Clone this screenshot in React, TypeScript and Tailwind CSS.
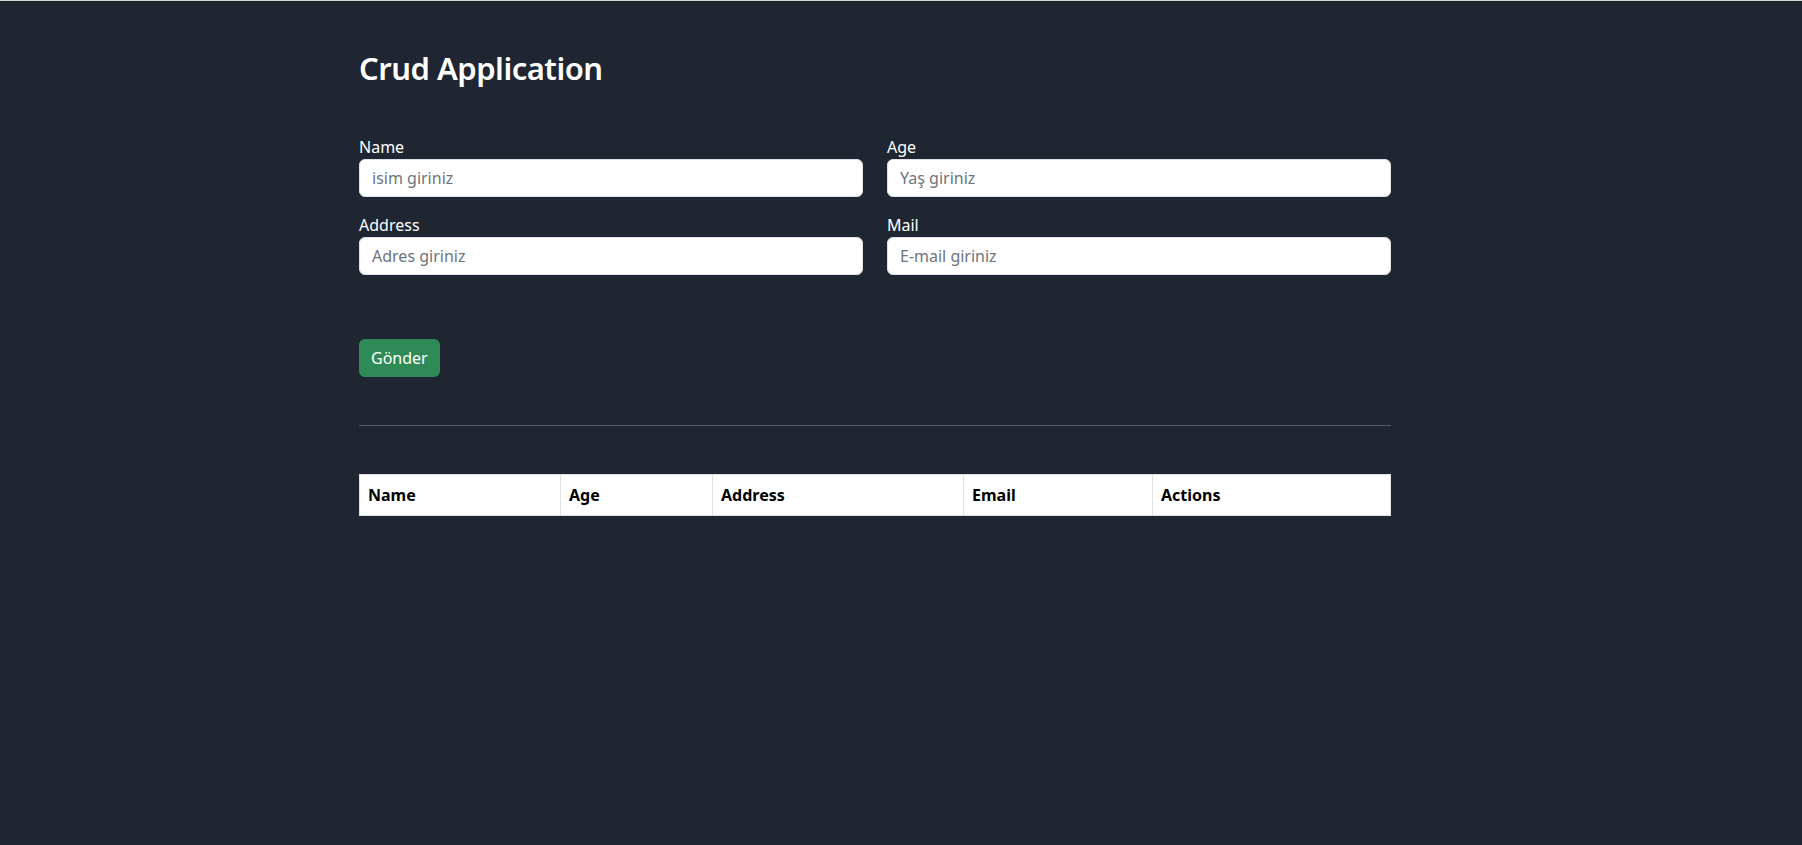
import React from "react";

const fields = [
  { label: "Name", placeholder: "isim giriniz" },
  { label: "Age", placeholder: "Yaş giriniz" },
  { label: "Address", placeholder: "Adres giriniz" },
  { label: "Mail", placeholder: "E-mail giriniz" },
];

const cols = [
  { name: "Name", w: "w-[201px]" },
  { name: "Age", w: "w-[152px]" },
  { name: "Address", w: "w-[251px]" },
  { name: "Email", w: "w-[189px]" },
  { name: "Actions", w: "" },
];

export default function App() {
  return (
    <div
      className="min-h-screen bg-[#1f2631] border-t border-[#d4d4d4] text-white"
      style={{ fontFamily: '"Noto Sans", "Open Sans", sans-serif' }}
    >
      <div className="ml-[359px] w-[1032px] pt-[48px]">
        <h2 className="text-[31px] font-semibold leading-[39px] tracking-[-0.5px]">Crud Application</h2>
        <form className="mt-[47px]" onSubmit={(e) => e.preventDefault()}>
          <div className="grid grid-cols-2 gap-x-6">
            {fields.map((f) => (
              <div key={f.label} className="mb-4">
                <label className="block text-base leading-6">{f.label}</label>
                <input
                  type="text"
                  placeholder={f.placeholder}
                  className="block w-full h-[38px] px-3 rounded-md border border-[#dee2e6] bg-white text-base text-[#212529] placeholder:text-[#6c757d] outline-none"
                />
              </div>
            ))}
          </div>
          <button
            type="submit"
            className="mt-12 h-[38px] px-3 rounded-md bg-[#2e8b57] text-white text-base leading-6"
          >
            Gönder
          </button>
        </form>
        <div className="mt-12 h-px bg-[#565c66]" />
        <table className="mt-12 w-full border-collapse bg-white text-black">
          <thead>
            <tr>
              {cols.map((c) => (
                <th
                  key={c.name}
                  className={`${c.w} border border-[#dee2e6] px-2 py-2 text-left font-bold text-base leading-6`}
                >
                  {c.name}
                </th>
              ))}
            </tr>
          </thead>
        </table>
      </div>
    </div>
  );
}
